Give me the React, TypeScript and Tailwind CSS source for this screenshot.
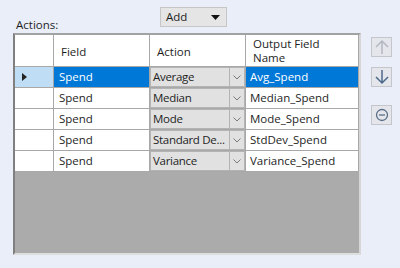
import React from 'react';

const rows = [
  { field: 'Spend', action: 'Average', output: 'Avg_Spend', selected: true },
  { field: 'Spend', action: 'Median', output: 'Median_Spend' },
  { field: 'Spend', action: 'Mode', output: 'Mode_Spend' },
  { field: 'Spend', action: 'Standard De...', output: 'StdDev_Spend' },
  { field: 'Spend', action: 'Variance', output: 'Variance_Spend' },
];

const Chevron = () => (
  <svg width="8" height="5" viewBox="0 0 8 5">
    <path d="M0.5 0.5 L4 4 L7.5 0.5" fill="none" stroke="#7a7a7a" strokeWidth="1" />
  </svg>
);

const SideButton = ({ children }: { children: React.ReactNode }) => (
  <div className="w-[21px] h-[20px] flex items-center justify-center bg-[#e4e6ec] border border-[#c4c6cc]">
    {children}
  </div>
);

export default function App() {
  return (
    <div
      className="w-[400px] h-[268px] bg-[#eaeef8] text-[11.5px] text-[#1e1e1e] pl-[13px]"
      style={{ fontFamily: '"Open Sans", "Noto Sans", sans-serif' }}
    >
      {/* top bar */}
      <div className="h-[33px] flex items-end relative">
        <span className="ml-[3px] mb-[3px] leading-none">Actions:</span>
        <div className="absolute left-[147px] top-[7px] w-[67px] h-[20px] bg-[#e5e5e5] border border-[#c6c6c6] flex items-center pl-[5px] pr-[6px] justify-between">
          <span className="leading-none">Add</span>
          <svg width="9" height="5" viewBox="0 0 9 5">
            <path d="M0 0 H9 L4.5 5 Z" fill="#111" />
          </svg>
        </div>
      </div>

      <div className="flex">
        {/* grid */}
        <div className="w-[348px] h-[222px] border-2 border-t-[#a2a2a2] border-l-[#808080] border-r-[#d6d6d6] border-b-[#dedede] bg-[#ababab] flex flex-col">
          <div className="flex h-[32px] bg-white border-b border-[#a8a8a8]">
            <div className="w-[39px] border-r border-[#a8a8a8]" />
            <div className="w-[96px] border-r border-[#a8a8a8] flex items-center pl-[7px] pt-[3px]">Field</div>
            <div className="w-[96px] border-r border-[#a8a8a8] flex items-center pl-[7px] pt-[3px]">Action</div>
            <div className="w-[113px] border-r border-[#a8a8a8] flex flex-col justify-center pl-[7px] pt-[1px] leading-[14px]">
              <span className="block">Output Field</span>
              <span className="block">Name</span>
            </div>
          </div>
          {rows.map((r, i) => (
            <div key={i} className="flex h-[21px] border-b border-[#a8a8a8]">
              <div className={`w-[39px] border-r border-[#a8a8a8] flex items-center pl-[7px] ${r.selected ? 'bg-[#bfdef5]' : 'bg-white'}`}>
                {r.selected && (
                  <svg width="5" height="8" viewBox="0 0 5 8">
                    <path d="M0 0 L5 4 L0 8 Z" fill="#222" />
                  </svg>
                )}
              </div>
              <div className={`w-[96px] border-r border-[#a8a8a8] flex items-center pl-[5px] ${r.selected ? 'bg-[#0078d7] text-white' : 'bg-white'}`}>
                {r.field}
              </div>
              <div className="w-[96px] border-r border-[#a8a8a8] flex bg-[#e1e1e1]">
                <div className="flex-1 flex items-center pl-[2px] border border-[#b4b4b4] border-r-0 whitespace-nowrap tracking-[-0.3px]">
                  {r.action}
                </div>
                <div className="w-[16px] flex items-center justify-center border border-[#b4b4b4]">
                  <Chevron />
                </div>
              </div>
              <div className={`w-[113px] border-r border-[#a8a8a8] flex items-center pl-[4px] ${r.selected ? 'bg-[#0078d7] text-white' : 'bg-white'}`}>
                {r.output}
              </div>
            </div>
          ))}
        </div>

        {/* side buttons */}
        <div className="ml-[10px] pt-[4px] flex flex-col gap-[10px]">
          <SideButton>
            <svg width="14" height="16" viewBox="0 0 14 16">
              <path d="M7 15 V2 M1 8 L7 2 L13 8" fill="none" stroke="#b4b8c0" strokeWidth="1.5" />
            </svg>
          </SideButton>
          <SideButton>
            <svg width="14" height="16" viewBox="0 0 14 16">
              <path d="M7 1 V14 M1 8 L7 14 L13 8" fill="none" stroke="#4c6a8c" strokeWidth="1.5" />
            </svg>
          </SideButton>
          <div className="mt-[8px]">
            <SideButton>
              <svg width="14" height="14" viewBox="0 0 14 14">
                <circle cx="7" cy="7" r="5.5" fill="none" stroke="#5a6f88" strokeWidth="1.3" />
                <path d="M4 7 H10" stroke="#5a6f88" strokeWidth="1.3" />
              </svg>
            </SideButton>
          </div>
        </div>
      </div>
    </div>
  );
}
